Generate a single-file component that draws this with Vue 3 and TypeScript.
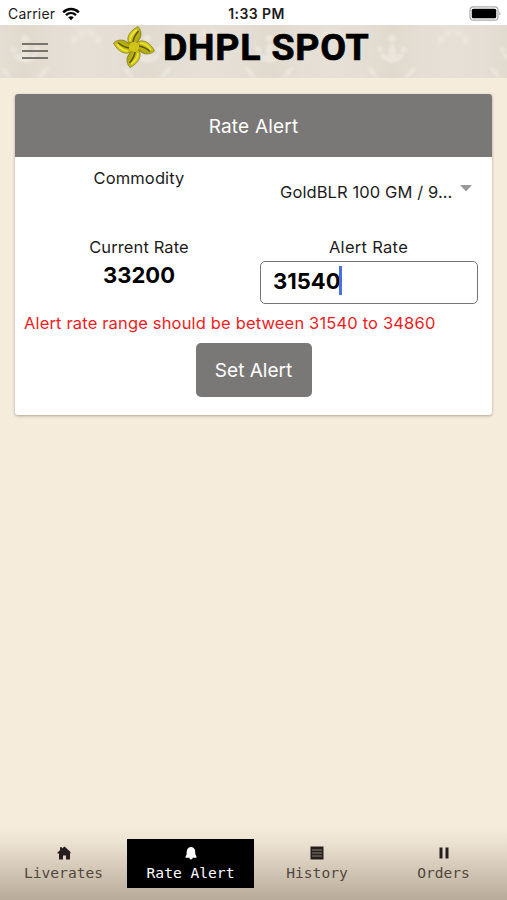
<script setup lang="ts">
import { ref } from 'vue'

interface Tab {
  id: string
  label: string
}

const tabs: Tab[] = [
  { id: 'home', label: 'Liverates' },
  { id: 'alert', label: 'Rate Alert' },
  { id: 'history', label: 'History' },
  { id: 'orders', label: 'Orders' },
]
const activeTab = ref('alert')
const alertRate = ref('31540')
const currentRate = 33200
const minRate = 31540
const maxRate = 34860
const petals = [0, 90, 180, 270]
</script>

<template>
  <div class="screen">
    <div class="status">
      <div class="carrier">
        <span>Carrier</span>
        <svg width="18" height="14" viewBox="0 0 18 14" fill="none" stroke="#000" stroke-width="2.4">
          <path d="M1.2 5.3C5.6.8 12.400.8 16.800 5.300" />
          <path d="M4 8.200C6.900 5.400 11.100 5.400 14 8.200" />
          <path d="M6.200 10.300Q9 8 11.800 10.300L9 13.200Z" fill="#000" stroke="none" />
        </svg>
      </div>
      <span class="clock">1:33 PM</span>
      <svg class="battery" width="33" height="15" viewBox="0 0 33 15">
        <rect x="1" y=".8" width="28" height="13.400" rx="3.500" fill="#fff" stroke="#aaa" stroke-width="1.200" />
        <rect x="2.800" y="2.800" width="24.400" height="9.400" rx="1.500" fill="#000" />
        <path d="M30.500 5.200q1.800 2.300 0 4.600z" fill="#999" />
      </svg>
    </div>

    <header class="header">
      <svg class="damask" width="507" height="53" viewBox="0 0 507 53" aria-hidden="true">
        <defs>
          <filter id="soft"><feGaussianBlur stdDeviation="0.9" /></filter>
          <linearGradient id="weave" x2="1">
            <stop stop-color="#e6e0d6" /><stop offset=".25" stop-color="#e4ded4" /><stop offset=".5" stop-color="#e0d9ce" /><stop offset=".75" stop-color="#e4ded4" /><stop offset="1" stop-color="#e6e0d6" />
          </linearGradient>
          <pattern id="floral" width="122.3" height="84" patternUnits="userSpaceOnUse" x="-36" y="0">
            <rect width="122.300" height="84" fill="url(#weave)" />
            <g fill="#ebe6dd" filter="url(#soft)">
              <path d="M61 38q-9-1-12-9 8-1 11 5-6-8 1-17 7 9 2 17 3-6 11-5-3 8-13 9z" />
              <path d="M46 25l3-4 4 4-3 3zM76 25l-3-4-4 4 3 3zM56 14l5-5 5 5-5 3z" />
              <path d="M36 42l5 1 6 8-2 2-5-4zM86 42l-5 1-8 8 3 2 6-4z" />
              <path d="M1 5l6 0 2 5-4 2-4-3zM10 10l5 2 0 6-4 1-3-4zM121.300 5l-6 0-2 5 4 2 4-3zM112 10l-5 2 0 6 4 1 3-4z" />
            </g>
          </pattern>
        </defs>
        <rect width="507" height="53" fill="url(#floral)" />
      </svg>
      <button class="menu" aria-label="Menu"><i></i><i></i><i></i></button>
      <div class="brand">
        <svg class="logo" width="44" height="44" viewBox="-22 -22 44 44">
          <defs>
            <linearGradient id="gold" x1="0" x2="1" y1="0" y2="1">
              <stop stop-color="#e2d823" /><stop offset=".5" stop-color="#c0b70d" /><stop offset="1" stop-color="#8a8306" />
            </linearGradient>
          </defs>
          <g v-for="angle in petals" :key="angle" :transform="`rotate(${angle})`">
            <path d="M0 3L-4-2C-9-8-5-16 4-20.500C8-16 8-10 4-6L5 0Z" fill="url(#gold)" stroke="#7a7222" stroke-width=".7" />
            <path d="M-4-6Q-4-12 3-17" fill="none" stroke="#eee43a" stroke-width="1.700" />
            <path d="M-1-5Q0-11 4.500-16" fill="none" stroke="#5b5705" stroke-width="1.600" />
          </g>
          <circle r="5" fill="#cfc417" />
        </svg>
        <span class="brand-name">DHPL SPOT</span>
      </div>
    </header>

    <main class="content">
      <section class="card">
        <h1>Rate Alert</h1>
        <div class="row commodity">
          <div class="cell label"><span>Commodity</span></div>
          <div class="select">
            <span class="selected">GoldBLR 100 GM / 9...</span>
            <svg width="12" height="7" viewBox="0 0 12 7"><path d="M0 0h12L6 6.500z" fill="#999" /></svg>
          </div>
        </div>
        <div class="row rates">
          <div class="cell">
            <span>Current Rate</span>
            <strong>{{ currentRate }}</strong>
          </div>
          <div class="cell">
            <span class="alert-label">Alert Rate</span>
            <div class="field"><span class="amount">{{ alertRate }}</span><i class="caret"></i></div>
          </div>
        </div>
        <p class="error"><span>Alert rate range should be between {{ minRate }} to {{ maxRate }}</span></p>
        <button class="submit"><span>Set Alert</span></button>
      </section>
    </main>

    <nav class="tabs">
      <button v-for="tab in tabs" :key="tab.id" class="tab" :class="{ active: tab.id === activeTab }" @click="activeTab = tab.id">
        <svg width="14" height="14" viewBox="0 0 14 14" fill="currentColor">
          <path v-if="tab.id === 'home'" d="M.5 6.500 3 4.200V1.200h2v1.300L7.500.5l6 5.500v1.500H13V13.500H9V9.500H6V13.500H2V7.500H.5z" />
          <path v-else-if="tab.id === 'alert'" d="M6 1.300Q7 0 8 1.300C11.300 2 11.300 5 11.300 8l1.200 2.700v1H8.700a1.700 1.700 0 0 1-3.400 0H1.500v-1L2.700 8C2.700 5 2.700 2 6 1.300z" />
          <g v-else-if="tab.id === 'history'">
            <path d="M.5.5h13v13H.5z" />
            <path d="M2 4h10M2 7h10M2 10h10" stroke="#96897d" stroke-width=".9" />
          </g>
          <path v-else d="M2.500 1.500h3v11h-3zM8.500 1.500h3v11h-3z" />
        </svg>
        <span>{{ tab.label }}</span>
      </button>
    </nav>
  </div>
</template>

<style>
body {
  margin: 0;
  background: #f5ecdc;
}
</style>

<style scoped>
* {
  box-sizing: border-box;
}
.screen {
  width: 507px;
  height: 900px;
  display: flex;
  flex-direction: column;
  background: #f5ecdc;
  font-family: Inter, sans-serif;
  color: #1c1c1c;
  overflow: hidden;
}
button {
  border: 0;
  padding: 0;
  font: inherit;
}
span {
  white-space: nowrap;
}
.status {
  height: 25px;
  flex: none;
  display: grid;
  grid-template-columns: 1fr auto 1fr;
  align-items: center;
  padding: 2px 5px 0 8px;
  background: #fff;
  font-size: 14px;
}
.carrier {
  display: flex;
  align-items: center;
  gap: 7px;
  letter-spacing: 0.2px;
}
.clock {
  margin-left: 3px;
  font-size: 14px;
  font-weight: 600;
  letter-spacing: 0.4px;
}
.battery {
  justify-self: end;
}
.header {
  position: relative;
  height: 53px;
  flex: none;
  display: flex;
  align-items: flex-start;
  padding-left: 22px;
}
.damask {
  position: absolute;
  inset: 0;
}
.menu {
  position: relative;
  width: 26px;
  margin-top: 18px;
  display: flex;
  flex-direction: column;
  gap: 5px;
  background: none;
}
.menu i {
  height: 2px;
  background: #77736d;
}
.brand {
  position: relative;
  display: flex;
  margin-left: 64px;
}
.brand-name {
  margin: 0 0 0 7px;
  font-family: Roboto, sans-serif;
  font-size: 37.5px;
  line-height: 45px;
  font-weight: 700;
  letter-spacing: 0.75px;
  color: #000;
  -webkit-text-stroke: 0.7px #000;
}
.content {
  flex: 1;
  padding: 16px 15px 0;
}
.card {
  height: 321px;
  display: flex;
  flex-direction: column;
  background: #fff;
  border-radius: 3px;
  box-shadow: 0 1px 3px rgba(70, 50, 30, 0.4);
  overflow: hidden;
}
h1 {
  margin: 0;
  height: 63px;
  flex: none;
  background: #7a7876;
  color: #fff;
  font-size: 19px;
  font-weight: 400;
  line-height: 65px;
  letter-spacing: 0.2px;
  text-align: center;
}
.row {
  display: grid;
  grid-template-columns: 245px 218px;
  flex: none;
}
.commodity {
  height: 78px;
}
.label {
  padding-top: 10px;
}
.cell {
  display: flex;
  flex-direction: column;
  align-items: center;
  font-size: 16.5px;
  line-height: 22px;
  letter-spacing: 0.12px;
}
.label,
.rates .cell:first-child {
  padding-left: 3px;
}
.select {
  display: flex;
  justify-content: space-between;
  padding: 24px 6px 0 20px;
  font-size: 16.5px;
  line-height: 22px;
  letter-spacing: 0.1px;
}
.select svg {
  margin-top: 4px;
}
.rates {
  height: 69px;
}
.rates > .cell {
  line-height: 24px;
}
.alert-label {
  margin-right: 1px;
  letter-spacing: 0.3px;
}
strong,
.amount {
  font-size: 22px;
  font-weight: 700;
  letter-spacing: 0;
  color: #000;
}
strong {
  line-height: 33px;
}
.field {
  width: 218px;
  height: 43px;
  margin-top: 2px;
  padding: 4px 0 0 12px;
  display: flex;
  border: 1.5px solid #757575;
  border-radius: 5px;
}
.amount {
  line-height: 31px;
}
.caret {
  width: 3px;
  height: 29px;
  margin-left: -1px;
  background: #4a71e3;
}
.error {
  margin: 8px 0 0 9px;
  height: 31px;
  color: #ef1c22;
  font-size: 16.5px;
  line-height: 23px;
  letter-spacing: 0.16px;
}
.submit {
  width: 116px;
  height: 54px;
  flex: none;
  align-self: center;
  border-radius: 5px;
  background: #7a7876;
  color: #fff;
  font-size: 19px;
}
.tabs {
  height: 75px;
  flex: none;
  display: grid;
  grid-template-columns: 127px 127px 126px 127px;
  align-items: start;
  padding-top: 14px;
  background: linear-gradient(#f5ecdc, #eee4d3 20%, #b7aa99);
}
.tab {
  height: 49px;
  display: flex;
  flex-direction: column;
  align-items: center;
  padding-top: 7px;
  background: none;
  color: #241f1d;
}
.tab span {
  margin-top: 3px;
  color: #51483f;
  font: 14.6px/20px "DejaVu Sans Mono", monospace;
}
.tab.active {
  background: #000;
  color: #fff;
}
.tab.active span {
  color: #fff;
}
</style>
